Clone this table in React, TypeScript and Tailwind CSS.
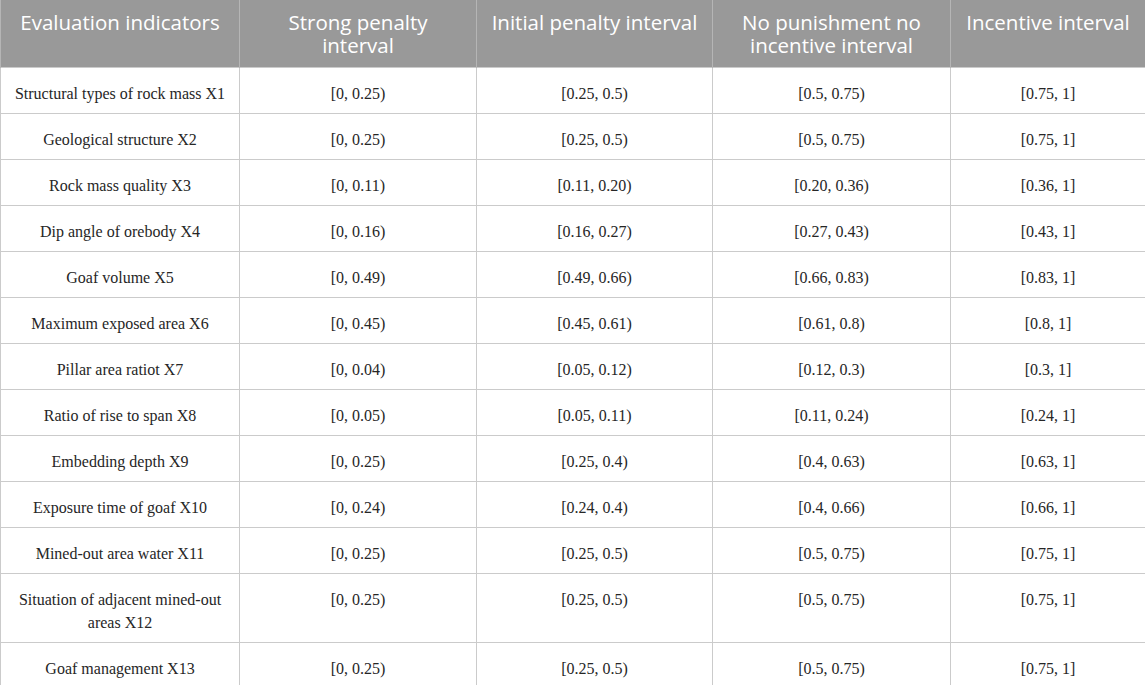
const headers = [
  "Evaluation indicators",
  "Strong penalty interval",
  "Initial penalty interval",
  "No punishment no incentive interval",
  "Incentive interval",
];

const widths = ["w-[239px]", "w-[237px]", "w-[236px]", "w-[238px]", "w-[195px]"];

const rows: string[][] = [
  ["Structural types of rock mass X1", "[0, 0.25)", "[0.25, 0.5)", "[0.5, 0.75)", "[0.75, 1]"],
  ["Geological structure X2", "[0, 0.25)", "[0.25, 0.5)", "[0.5, 0.75)", "[0.75, 1]"],
  ["Rock mass quality X3", "[0, 0.11)", "[0.11, 0.20)", "[0.20, 0.36)", "[0.36, 1]"],
  ["Dip angle of orebody X4", "[0, 0.16)", "[0.16, 0.27)", "[0.27, 0.43)", "[0.43, 1]"],
  ["Goaf volume X5", "[0, 0.49)", "[0.49, 0.66)", "[0.66, 0.83)", "[0.83, 1]"],
  ["Maximum exposed area X6", "[0, 0.45)", "[0.45, 0.61)", "[0.61, 0.8)", "[0.8, 1]"],
  ["Pillar area ratiot X7", "[0, 0.04)", "[0.05, 0.12)", "[0.12, 0.3)", "[0.3, 1]"],
  ["Ratio of rise to span X8", "[0, 0.05)", "[0.05, 0.11)", "[0.11, 0.24)", "[0.24, 1]"],
  ["Embedding depth X9", "[0, 0.25)", "[0.25, 0.4)", "[0.4, 0.63)", "[0.63, 1]"],
  ["Exposure time of goaf X10", "[0, 0.24)", "[0.24, 0.4)", "[0.4, 0.66)", "[0.66, 1]"],
  ["Mined-out area water X11", "[0, 0.25)", "[0.25, 0.5)", "[0.5, 0.75)", "[0.75, 1]"],
  ["Situation of adjacent mined-out areas X12", "[0, 0.25)", "[0.25, 0.5)", "[0.5, 0.75)", "[0.75, 1]"],
  ["Goaf management X13", "[0, 0.25)", "[0.25, 0.5)", "[0.5, 0.75)", "[0.75, 1]"],
];

export default function App() {
  return (
    <div className="w-[1145px] h-[685px] overflow-hidden bg-white">
      <table className="w-[1145px] table-fixed border-collapse">
        <colgroup>
          {widths.map((w, i) => (
            <col key={i} className={w} />
          ))}
        </colgroup>
        <thead>
          <tr className="bg-[#999999]">
            {headers.map((h) => (
              <th
                key={h}
                className="h-[67px] border-x border-[#b5b5b5] px-[14px] pt-[11px] align-top text-center text-[20.5px] font-normal leading-[23px] text-white font-['Open_Sans',sans-serif]"
              >
                {h}
              </th>
            ))}
          </tr>
        </thead>
        <tbody>
          {rows.map((r) => (
            <tr key={r[0]}>
              {r.map((c, i) => (
                <td
                  key={i}
                  className="border border-[#cbcbcb] px-[10px] pt-[14px] pb-[8px] align-top text-center text-[16px] leading-[23px] text-[#262626] font-['Liberation_Serif',serif]"
                >
                  {c}
                </td>
              ))}
            </tr>
          ))}
        </tbody>
      </table>
    </div>
  );
}
